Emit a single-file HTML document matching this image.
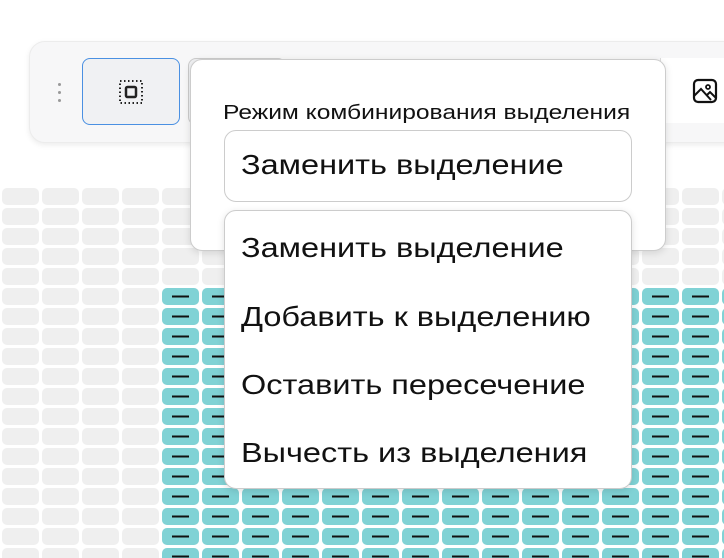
<!DOCTYPE html>
<html><head><meta charset="utf-8"><style>
body{margin:0;width:724px;height:558px;background:#fff;position:relative;overflow:hidden;font-family:"Liberation Sans",Arial,sans-serif;}
.abs{position:absolute;}
.sx{transform-origin:0 0;}
</style></head><body>
<svg class="abs" style="left:0;top:0" width="724" height="558">
<defs>
<pattern id="g" x="0" y="188" width="40" height="20" patternUnits="userSpaceOnUse"><rect x="2" y="0" width="37" height="17" rx="5" fill="#efefef"/></pattern>
<pattern id="t" x="0" y="188" width="40" height="20" patternUnits="userSpaceOnUse"><rect x="2" y="0" width="37" height="17" rx="5" fill="#80d2d5"/><rect x="12" y="7.5" width="17" height="2" fill="#111"/></pattern>
</defs>
<rect x="0" y="188" width="724" height="370" fill="url(#g)"/>
<rect x="160" y="287" width="564" height="271" fill="url(#t)"/>
</svg>
<div class="abs" style="left:29px;top:41px;width:720px;height:100px;background:#f7f7f8;border-radius:16px;box-shadow:0 2px 6px rgba(0,0,0,.08);border:1px solid #ececec"></div>
<div class="abs" style="left:58px;top:83px;width:3px;height:3px;border-radius:50%;background:#999"></div>
<div class="abs" style="left:58px;top:91px;width:3px;height:3px;border-radius:50%;background:#999"></div>
<div class="abs" style="left:58px;top:99px;width:3px;height:3px;border-radius:50%;background:#999"></div>
<div class="abs" style="left:82px;top:58px;width:96px;height:65px;border:1.5px solid #4a90e2;border-radius:8px;background:#f0f1f3"></div>
<svg class="abs" style="left:118px;top:79px" width="26" height="26" viewBox="0 0 26 26">
<rect x="2" y="2" width="22" height="22" fill="none" stroke="#222" stroke-width="2" stroke-dasharray="1.5 2.5"/>
<rect x="8" y="8" width="10" height="10" rx="1.5" fill="none" stroke="#222" stroke-width="2.5"/>
</svg>
<div class="abs" style="left:188px;top:58px;width:96px;height:65px;border:1px solid #ccc;border-radius:8px;background:#f0f1f3"></div>
<div class="abs" style="left:660px;top:58px;width:80px;height:65px;border-left:1px solid #ddd;background:#fff"></div>
<svg class="abs" style="left:691px;top:77px" width="28" height="28" viewBox="0 0 28 28">
<rect x="3" y="3" width="22" height="22" rx="4" fill="none" stroke="#111" stroke-width="2.2"/>
<circle cx="17" cy="10" r="2" fill="none" stroke="#111" stroke-width="1.8"/>
<path d="M3 19 L10 12 L20 23 M16 18 L19 15 L25 21" fill="none" stroke="#111" stroke-width="2"/>
</svg>
<div class="abs" style="left:190px;top:59px;width:474px;height:190px;background:#fff;border:1px solid #ccc;border-radius:12px;box-shadow:0 2px 8px rgba(0,0,0,.12)"></div>
<div class="abs sx" style="left:223px;top:102px;font-size:20px;color:#111;white-space:nowrap;transform:scaleX(1.23)">Режим комбинирования выделения</div>
<div class="abs" style="left:224px;top:130px;width:406px;height:70px;border:1.5px solid #ccc;border-radius:12px;background:#fff"></div>
<div class="abs sx" style="left:241px;top:149px;font-size:28px;color:#111;white-space:nowrap;transform:scaleX(1.16)">Заменить выделение</div>
<div class="abs" style="left:224px;top:210px;width:406px;height:277px;border:1.5px solid #ccc;border-radius:12px;background:#fff;box-shadow:0 2px 8px rgba(0,0,0,.12)"></div>
<div class="abs sx" style="left:241px;top:231px;font-size:28px;color:#111;white-space:nowrap;line-height:34px;transform:scaleX(1.16)">
<div style="height:69px">Заменить выделение</div>
<div style="height:68px">Добавить к выделению</div>
<div style="height:68px">Оставить пересечение</div>
<div>Вычесть из выделения</div>
</div>
</body></html>
